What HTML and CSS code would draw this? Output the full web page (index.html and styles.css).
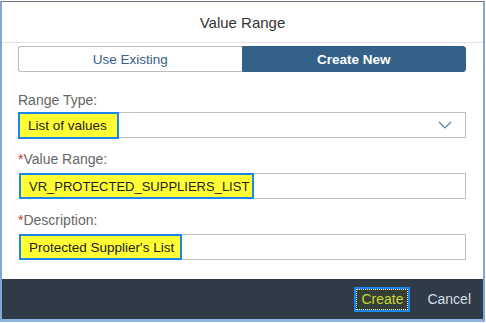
FILE: index.html
```html
<!DOCTYPE html>
<html lang="en">
<head>
    <meta charset="UTF-8">
    <title>Value Range</title>
    <link rel="stylesheet" href="styles.css">
</head>
<body>
    <div class="dialog">
        <header class="dialog-header">Value Range</header>
        <div class="dialog-body">
            <div class="segmented">
                <button class="seg">Use Existing</button>
                <button class="seg active">Create New</button>
            </div>

            <label class="label first">Range Type:</label>
            <div class="field select">
                <span class="mark">List of values</span>
                <svg class="chevron" width="14" height="8" viewBox="0 0 14 8">
                    <path d="M1 1 L7 7 L13 1" fill="none" stroke="#5a7ea6" stroke-width="1.2"/>
                </svg>
            </div>

            <label class="label"><span class="req">*</span>Value Range:</label>
            <div class="field">
                <span class="mark caps">VR_PROTECTED_SUPPLIERS_LIST</span>
            </div>

            <label class="label"><span class="req">*</span>Description:</label>
            <div class="field">
                <span class="mark">Protected Supplier's List</span>
            </div>
        </div>
        <footer class="dialog-footer">
            <button class="btn-create">Create</button>
            <button class="btn-cancel">Cancel</button>
        </footer>
    </div>
</body>
</html>
```

FILE: styles.css
```css
* {
    box-sizing: border-box;
    margin: 0;
    padding: 0;
}
body {
    font-family: 'Liberation Sans', Arial, sans-serif;
    background: #fff;
    width: 486px;
    height: 323px;
}
.dialog {
    width: 485px;
    height: 321px;
    margin-top: 1px;
    background: #fff;
    border-top: 1px solid #6b7480;
    border-left: 2px solid #7fa8d4;
    border-right: 2px solid #7fa8d4;
    border-bottom: 3px solid #8db6e2;
    display: flex;
    flex-direction: column;
}
.dialog-header {
    height: 41px;
    border-bottom: 1px solid #e3e3e3;
    text-align: center;
    font-size: 15px;
    line-height: 42px;
    color: #333;
}
.dialog-body {
    flex: 1;
    padding: 3px 17px 0 16px;
}
.segmented {
    display: flex;
    height: 26px;
}
.seg {
    flex: 1;
    font-family: inherit;
    font-size: 13.5px;
    background: #fff;
    color: #346187;
    border: 1px solid #bcbcbc;
    border-right: none;
    border-radius: 3px 0 0 3px;
}
.seg.active {
    background: #346187;
    color: #fff;
    font-weight: bold;
    border: 1px solid #346187;
    border-radius: 0 3px 3px 0;
}
.label {
    display: block;
    font-size: 14px;
    color: #666;
    margin-top: 13px;
    height: 16px;
    line-height: 16px;
}
.label.first {
    margin-top: 20px;
}
.req {
    color: #c0392b;
}
.field {
    margin-top: 6px;
    margin-left: 1px;
    height: 26px;
    border: 1px solid #bfbfbf;
    display: flex;
    align-items: stretch;
    justify-content: space-between;
}
.mark {
    margin: -1px 0 -1px -1px;
    padding: 0 6px 0 8px;
    background: #ffff33;
    border: 2px solid #1a86f0;
    color: #222;
    font-size: 13.5px;
    display: flex;
    align-items: center;
}
.mark.caps {
    font-size: 13px;
    padding-right: 3px;
}
.select {
    margin-top: 4px;
}
.select .mark {
    margin-left: -2px;
    margin-bottom: -2px;
    padding-right: 10px;
}
.chevron {
    align-self: center;
    margin-right: 13px;
}
.dialog-footer {
    height: 40px;
    background: #2f3b47;
    display: flex;
    align-items: center;
    justify-content: flex-end;
    padding-right: 12px;
    gap: 17px;
}
.btn-create {
    height: 25px;
    width: 56px;
    font-family: inherit;
    font-size: 14px;
    color: #c6d83a;
    background: #363f35;
    border: 2px solid #1a86f0;
    outline: 1px dotted #f0f0d0;
    outline-offset: -3px;
}
.btn-cancel {
    font-family: inherit;
    font-size: 14px;
    color: #d6dfe8;
    background: none;
    border: none;
}
```
